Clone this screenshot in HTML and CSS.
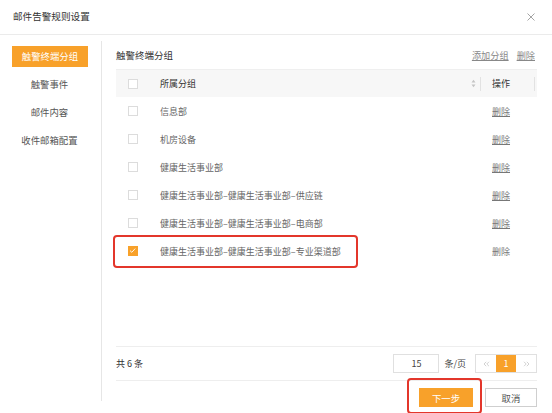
FILE: index.html
```html
<!DOCTYPE html>
<html lang="zh-CN">
<head>
<meta charset="utf-8">
<title>邮件告警规则设置</title>
<link rel="stylesheet" href="styles.css">
</head>
<body>
<div class="dialog">
  <div class="hd">
    <span class="title">邮件告警规则设置</span>
    <span class="close"><svg width="8" height="8" viewBox="0 0 8 8"><path d="M0.5 0.5 L7.5 7.5 M7.5 0.5 L0.5 7.5" stroke="#9a9a9a" stroke-width="0.9" fill="none"/></svg></span>
  </div>
  <div class="main">
    <nav class="side">
      <div class="nav-item active"><span class="pill">触警终端分组</span></div>
      <div class="nav-item">触警事件</div>
      <div class="nav-item">邮件内容</div>
      <div class="nav-item">收件邮箱配置</div>
    </nav>
    <section class="content">
      <div class="toolbar">
        <span class="heading">触警终端分组</span>
        <span class="links"><a class="lnk">添加分组</a><a class="lnk">删除</a></span>
      </div>
      <div class="table">
        <div class="tr th">
          <div class="c-chk"><i class="cb"></i></div>
          <div class="c-name">所属分组<span class="sort"><svg width="5" height="9" viewBox="0 0 5 9"><path d="M0.5 3.5 L2.5 0.8 L4.5 3.5 Z M0.5 5.5 L2.5 8.2 L4.5 5.5 Z" fill="#c4c4c4"/></svg></span></div>
          <div class="c-op">操作</div>
        </div>
        <div class="tr"><div class="c-chk"><i class="cb"></i></div><div class="c-name">信息部</div><div class="c-op"><a class="del">删除</a></div></div>
        <div class="tr"><div class="c-chk"><i class="cb"></i></div><div class="c-name">机房设备</div><div class="c-op"><a class="del">删除</a></div></div>
        <div class="tr"><div class="c-chk"><i class="cb"></i></div><div class="c-name">健康生活事业部</div><div class="c-op"><a class="del">删除</a></div></div>
        <div class="tr"><div class="c-chk"><i class="cb"></i></div><div class="c-name">健康生活事业部–健康生活事业部–供应链</div><div class="c-op"><a class="del">删除</a></div></div>
        <div class="tr"><div class="c-chk"><i class="cb"></i></div><div class="c-name">健康生活事业部–健康生活事业部–电商部</div><div class="c-op"><a class="del">删除</a></div></div>
        <div class="tr"><div class="c-chk"><i class="cb checked"><svg width="9" height="9" viewBox="0 0 9 9"><path d="M2 4.6 L3.8 6.3 L7.2 2.6" stroke="#fff" stroke-width="0.9" fill="none"/></svg></i></div><div class="c-name">健康生活事业部–健康生活事业部–专业渠道部</div><div class="c-op"><a class="del plain">删除</a></div></div>
      </div>
      <div class="spacer"></div>
      <div class="footer">
        <span class="total">共 6 条</span>
        <div class="pagin">
          <span class="size">15</span>
          <span class="per">条/页</span>
          <div class="pager">
            <span class="pg"><svg width="7" height="6" viewBox="0 0 7 6"><path d="M3.2 0.8 L1 3 L3.2 5.2 M6 0.8 L3.8 3 L6 5.2" stroke="#c6c6c6" stroke-width="0.8" fill="none"/></svg></span>
            <span class="pg cur">1</span>
            <span class="pg"><svg width="7" height="6" viewBox="0 0 7 6"><path d="M1 0.8 L3.2 3 L1 5.2 M3.8 0.8 L6 3 L3.8 5.2" stroke="#c6c6c6" stroke-width="0.8" fill="none"/></svg></span>
          </div>
        </div>
      </div>
      <div class="actions">
        <button class="btn primary">下一步</button>
        <button class="btn">取消</button>
      </div>
    </section>
  </div>
  <div class="mark mark-row"></div>
  <div class="mark mark-btn"></div>
</div>
</body>
</html>
```
FILE: styles.css
```css
* { box-sizing: border-box; }
html, body { margin: 0; padding: 0; background: #fff; }
body {
  font-family: "Noto Sans CJK SC", "Noto Sans", sans-serif;
  color: #333;
}
.dialog {
  position: relative;
  width: 552px;
  height: 413px;
  overflow: hidden;
  background: #fff;
}
.hd {
  height: 35px;
  border-bottom: 1px solid #ebebeb;
  display: flex;
  align-items: center;
  justify-content: space-between;
  padding: 0 17px 1px 13px;
}
.title { font-size: 9.6px; color: #333; line-height: 1; }
.close { display: flex; width: 8px; height: 8px; margin-top: 1px; }

.main {
  display: flex;
  align-items: flex-start;
  margin-top: 6px;
}
.side {
  width: 102px;
  height: 360px;
  border-right: 1px solid #e6e6e6;
  padding-top: 1px;
  flex: none;
}
.nav-item {
  height: 28px;
  display: flex;
  align-items: center;
  justify-content: center;
  font-size: 9.4px;
  color: #555;
  padding-right: 2px;
}
.nav-item.active { justify-content: flex-start; padding-left: 12px; }
.pill {
  width: 76px;
  height: 21px;
  background: #f8a12a;
  color: #fff;
  display: flex;
  align-items: center;
  justify-content: center;
}

.content {
  flex: 1;
  padding: 0 15px 0 14px;
  display: flex;
  flex-direction: column;
}
.toolbar {
  height: 28px;
  display: flex;
  align-items: center;
  justify-content: space-between;
}
.heading { font-size: 9.5px; color: #333; }
.links { display: flex; gap: 8px; padding-right: 2px; }
.lnk { font-size: 9.2px; color: #888; text-decoration: underline; text-underline-offset: 1px; }

.table { display: flex; flex-direction: column; }
.tr {
  height: 28px;
  display: flex;
  align-items: center;
  font-size: 9px;
  color: #666;
}
.th {
  background: #f7f7f7;
  border-top: 1px solid #efefef;
  color: #333;
}
.c-chk { width: 44px; padding-left: 12px; display: flex; align-items: center; }
.c-name { flex: 1; display: flex; align-items: center; position: relative; height: 100%; }
.c-op { width: 56px; padding-left: 11px; height: 100%; display: flex; align-items: center; position: relative; }
.th .c-name::after {
  content: "";
  position: absolute;
  right: 0;
  top: 7px;
  width: 1px;
  height: 14px;
  background: #e2e2e2;
}
.th .c-op::after {
  content: "";
  position: absolute;
  right: 2px;
  top: 7px;
  width: 1px;
  height: 14px;
  background: #e2e2e2;
}
.sort { position: absolute; right: 5px; top: 9px; display: flex; }
.cb {
  display: flex;
  width: 10px;
  height: 10px;
  border: 1px solid #dcdcdc;
  background: #fff;
}
.cb.checked { background: #f8a12a; border-color: #f8a12a; }
.cb.checked svg { margin: -1px 0 0 -1px; }
.del { color: #777; text-decoration: underline; text-underline-offset: 1px; }
.del.plain { text-decoration: none; }

.spacer { height: 81px; }
.footer {
  height: 35px;
  border-top: 1px solid #eee;
  border-bottom: 1px solid #eee;
  display: flex;
  align-items: center;
  justify-content: space-between;
}
.total { font-size: 9px; color: #333; }
.pagin { display: flex; align-items: center; }
.size {
  width: 46px;
  height: 19px;
  border: 1px solid #e0e0e0;
  display: flex;
  align-items: center;
  justify-content: center;
  font-size: 9px;
  color: #444;
}
.per { font-size: 9px; color: #444; margin-left: 5px; }
.pager {
  display: flex;
  margin-left: 9px;
  border: 1px solid #e0e0e0;
  height: 19px;
}
.pg {
  width: 20px;
  display: flex;
  align-items: center;
  justify-content: center;
  font-size: 9px;
}
.cur { background: #f8a12a; color: #fff; }

.actions {
  display: flex;
  justify-content: flex-end;
  gap: 12px;
  margin-top: 7px;
}
.btn {
  height: 19px;
  padding: 0;
  font-family: inherit;
  font-size: 9.4px;
  display: flex;
  align-items: center;
  justify-content: center;
  border: 1px solid #cfcfcf;
  background: #fff;
  color: #555;
  width: 52px;
}
.btn.primary { width: 54px; background: #f8a12a; border-color: #f8a12a; color: #fff; }

.mark {
  position: absolute;
  border: 2px solid #e3362b;
  border-radius: 4px;
}
.mark-row { left: 113px; top: 235px; width: 245px; height: 33px; }
.mark-btn { left: 407px; top: 378px; width: 75px; height: 36px; }
```
